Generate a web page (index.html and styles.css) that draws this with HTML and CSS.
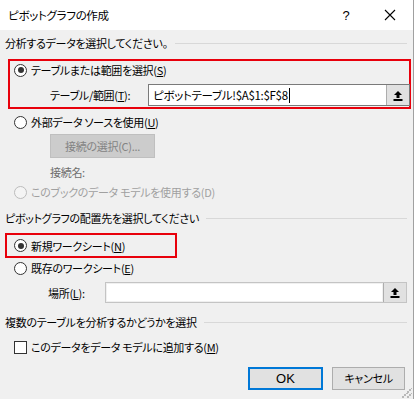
FILE: index.html
```html
<!DOCTYPE html>
<html lang="ja">
<head>
    <meta charset="UTF-8">
    <meta name="viewport" content="width=device-width, initial-scale=1.0">
    <link rel="stylesheet" href="styles.css">
</head>
<body>
<div class="dialog">
    <!-- タイトルバー -->
    <div class="titlebar">
        <span class="title">ピボットグラフの作成</span>
        <span class="help">?</span>
        <span class="close">
            <svg width="12" height="12" viewBox="0 0 12 12"><path d="M1 1L11 11M11 1L1 11" stroke="#000" stroke-width="1.1"/></svg>
        </span>
    </div>

    <div class="content">
        <!-- 分析するデータ -->
        <div class="group-head head-1"><span>分析するデータを選択してください。</span><i class="rule"></i></div>

        <div class="mark mark-1">
            <div class="row"><span class="radio on"></span><span>テーブルまたは範囲を選択(<u>S</u>)</span></div>
            <div class="field-row range-row">
                <span class="field-label">テーブル/範囲(<u>T</u>):</span>
                <div class="field">
                    <span class="field-text">ピボットテーブル!$A$1:$F$8<i class="caret"></i></span>
                    <span class="pick"><svg width="10" height="11" viewBox="0 0 10 11"><path d="M5 1L9 5H6.5V8H3.5V5H1Z" fill="#000"/><rect x="0.5" y="9" width="9" height="2" fill="#000"/></svg></span>
                </div>
            </div>
        </div>

        <div class="row row-ext"><span class="radio"></span><span>外部データ ソースを使用(<u>U</u>)</span></div>
        <div class="conn-btn">接続の選択(C)...</div>
        <div class="row conn-name">接続名:</div>
        <div class="row disabled"><span class="radio"></span><span>このブックのデータ モデルを使用する(D)</span></div>

        <!-- 配置先 -->
        <div class="group-head head-2"><span>ピボットグラフの配置先を選択してください</span><i class="rule"></i></div>

        <div class="mark mark-2">
            <div class="row"><span class="radio on"></span><span>新規ワークシート(<u>N</u>)</span></div>
        </div>
        <div class="row row-exist"><span class="radio"></span><span>既存のワークシート(<u>E</u>)</span></div>
        <div class="field-row place-row">
            <span class="field-label">場所(<u>L</u>):</span>
            <div class="field off">
                <span class="field-text"></span>
                <span class="pick"><svg width="10" height="11" viewBox="0 0 10 11"><path d="M5 1L9 5H6.5V8H3.5V5H1Z" fill="#000"/><rect x="0.5" y="9" width="9" height="2" fill="#000"/></svg></span>
            </div>
        </div>

        <!-- 複数テーブル -->
        <div class="group-head head-3"><span>複数のテーブルを分析するかどうかを選択</span><i class="rule"></i></div>
        <div class="row check-row"><span class="check"></span><span>このデータをデータ モデルに追加する(<u>M</u>)</span></div>

        <div class="buttons">
            <div class="btn default">OK</div>
            <div class="btn">キャンセル</div>
        </div>
    </div>
    <div class="grip"></div>
</div>
</body>
</html>
```

FILE: styles.css
```css
body {
    margin: 0;
    background: #f0f0f0;
    font-family: "Noto Sans CJK JP", "Noto Sans", sans-serif;
    font-size: 11px;
    letter-spacing: -0.3px;
    font-feature-settings: "palt";
    color: #000;
    overflow: hidden;
}

.dialog {
    position: relative;
    width: 413px;
    height: 399px;
    border-right: 1px solid #a0a0a0;
    background: #f0f0f0;
}

/* タイトルバー */
.titlebar {
    height: 30px;
    background: #fff;
    display: flex;
    align-items: center;
    padding-left: 8px;
}

.title {
    flex: 1;
    font-size: 11.5px;
}

.help {
    width: 20px;
    margin-right: 28px;
    font-family: "Liberation Sans", sans-serif;
    font-size: 13px;
    text-align: center;
}

.close {
    width: 12px;
    height: 12px;
    margin-right: 17px;
    display: flex;
}

.content {
    padding-right: 6px;
}

/* グループ見出し */
.group-head {
    height: 20px;
    display: flex;
    align-items: center;
    padding-left: 5px;
}

.group-head .rule {
    flex: 1;
    height: 1px;
    background: #d8d8d8;
    margin-left: 7px;
}

.head-1 { margin-top: 3px; }
.head-2 { margin-top: 7px; }
.head-3 { margin-top: 9px; }

/* 赤枠 */
.mark {
    border: 2px solid #e8000b;
}

.mark-1 {
    margin: 6px 0 0 8px;
    width: 395px;
    height: 46px;
    padding-left: 4px;
}

.mark-2 {
    margin: 5px 0 0 5px;
    width: 161px;
    height: 21px;
    padding-left: 7px;
    display: flex;
    align-items: center;
}

.row {
    height: 18px;
    display: flex;
    align-items: center;
    gap: 4px;
    padding-left: 14px;
}

.mark .row {
    padding-left: 0;
}

.radio {
    width: 11px;
    height: 11px;
    border: 1px solid #333;
    border-radius: 50%;
    background: #fff;
    position: relative;
    flex: none;
}

.radio.on::after {
    content: "";
    position: absolute;
    left: 2.5px;
    top: 2.5px;
    width: 6px;
    height: 6px;
    border-radius: 50%;
    background: #333;
}

.check {
    width: 11px;
    height: 11px;
    border: 1px solid #333;
    background: #fff;
    flex: none;
}

/* 入力欄 */
.field-row {
    display: flex;
    align-items: center;
}

.range-row {
    margin-top: 5px;
    height: 22px;
    padding-left: 36px;
}

.range-row .field-label {
    width: 98px;
}

.place-row {
    margin-top: 5px;
    height: 21px;
    padding-left: 48px;
}

.place-row .field-label {
    width: 57px;
}

.field {
    flex: 1;
    align-self: stretch;
    display: flex;
    border: 1px solid #7a7a7a;
    background: #fff;
}

.range-row .field {
    margin-right: -1px;
}

.place-row .field {
    margin-right: 0;
    border-color: #c4c4c4;
    background: #f0f0f0;
}

.field-text {
    flex: 1;
    padding-left: 4px;
    display: flex;
    align-items: center;
    font-size: 11.5px;
}

.place-row .field-text {
    background: #fff;
    margin: 1px;
}

.caret {
    width: 1px;
    height: 15px;
    background: #000;
    margin-left: 1px;
}

.pick {
    width: 22px;
    background: #e1e1e1;
    border-left: 1px solid #adadad;
    display: flex;
    align-items: center;
    justify-content: center;
}

.row-ext { margin-top: 4px; }

.conn-btn {
    margin: 3px 0 0 50px;
    width: 103px;
    height: 22px;
    line-height: 22px;
    text-align: center;
    background: #cccccc;
    border: 1px solid #bfbfbf;
    color: #838383;
}

.conn-name {
    margin-top: 5px;
    padding-left: 50px;
    color: #6d6d6d;
}

.disabled {
    margin-top: 2px;
    color: #a0a0a0;
}

.disabled .radio {
    border-color: #bcbcbc;
    background: #f4f4f4;
}

.row-exist { margin-top: 1px; }

.check-row { margin-top: 6px; }

/* ボタン */
.buttons {
    margin-top: 11px;
    display: flex;
    justify-content: flex-end;
    gap: 9px;
    padding-right: 2px;
}

.btn {
    width: 71px;
    height: 21px;
    line-height: 21px;
    text-align: center;
    background: #e1e1e1;
    border: 1px solid #adadad;
}

.btn.default {
    width: 71px;
    height: 19px;
    line-height: 19px;
    border: 2px solid #0078d7;
    font-family: "Liberation Sans", sans-serif;
    font-size: 13px;
    letter-spacing: 0;
}

/* リサイズグリップ */
.grip {
    position: absolute;
    right: 1px;
    bottom: 1px;
    width: 10px;
    height: 10px;
    background: linear-gradient(135deg, transparent 45%, #b8b8b8 45%, #b8b8b8 55%, transparent 55%, transparent 70%, #b8b8b8 70%, #b8b8b8 80%, transparent 80%);
}
```
